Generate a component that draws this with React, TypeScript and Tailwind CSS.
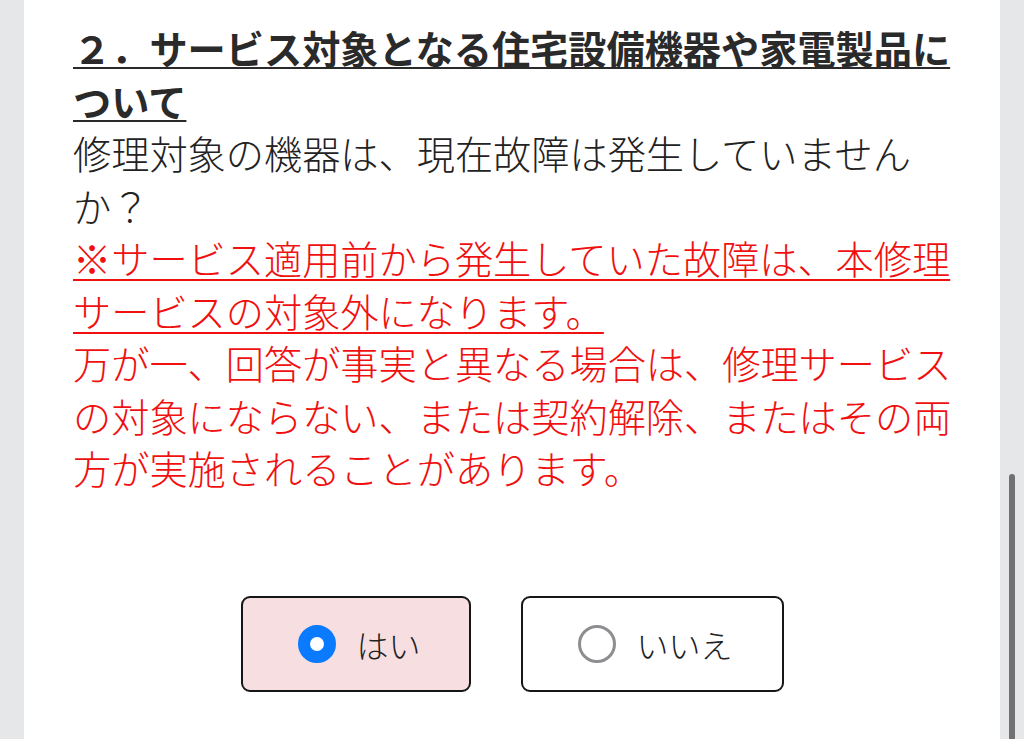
import React from "react";

export default function App() {
  return (
    <div
      className="flex h-[739px] w-[1024px] overflow-hidden bg-white"
      style={{ fontFamily: '"Noto Sans CJK JP", "Noto Sans", sans-serif' }}
    >
      <div className="w-[24px] shrink-0 bg-[#e6e7e9]" />
      <main className="flex flex-1 flex-col bg-white pl-[49px] pt-[22px]">
        <div className="w-[890px] text-[38.2px] leading-[52.5px] tracking-[0px]">
          <h2 className="font-bold text-[#2a2a2a] underline decoration-[2px] underline-offset-[3px]">
            ２．サービス対象となる住宅設備機器や家電製品について
          </h2>
          <p className="font-light text-[#222222]">
            修理対象の機器は、現在故障は発生していませんか？
          </p>
          <p className="font-light text-[#f01010]">
            <span className="underline decoration-[2px] underline-offset-[5px]">
              ※サービス適用前から発生していた故障は、本修理サービスの対象外になります。
            </span>
            <br />
            万が一、回答が事実と異なる場合は、修理サービスの対象にならない、または契約解除、またはその両方が実施されることがあります。
          </p>
        </div>
        <div className="mt-[101px] flex justify-center gap-[50px] pr-[49px]">
          <button className="flex h-[96px] w-[230px] items-center gap-[21px] rounded-[9px] border-2 border-[#161616] bg-[#f7dfe1] pl-[55px]">
            <span className="block h-[38px] w-[38px] rounded-full border-[12px] border-[#0a7aff] bg-white" />
            <span className="text-[32px] font-light leading-none text-[#222222]">はい</span>
          </button>
          <button className="flex h-[96px] w-[263px] items-center gap-[21px] rounded-[9px] border-2 border-[#161616] bg-white pl-[55px]">
            <span className="block h-[38px] w-[38px] rounded-full border-[3px] border-[#8e8e92] bg-white" />
            <span className="text-[32px] font-light leading-none text-[#222222]">いいえ</span>
          </button>
        </div>
      </main>
      <div className="flex w-[24px] shrink-0 flex-col bg-[#e6e7e9] pt-[474px] pl-[9px]">
        <div className="w-[6px] flex-1 rounded-t-full bg-[#717174]" />
      </div>
    </div>
  );
}
